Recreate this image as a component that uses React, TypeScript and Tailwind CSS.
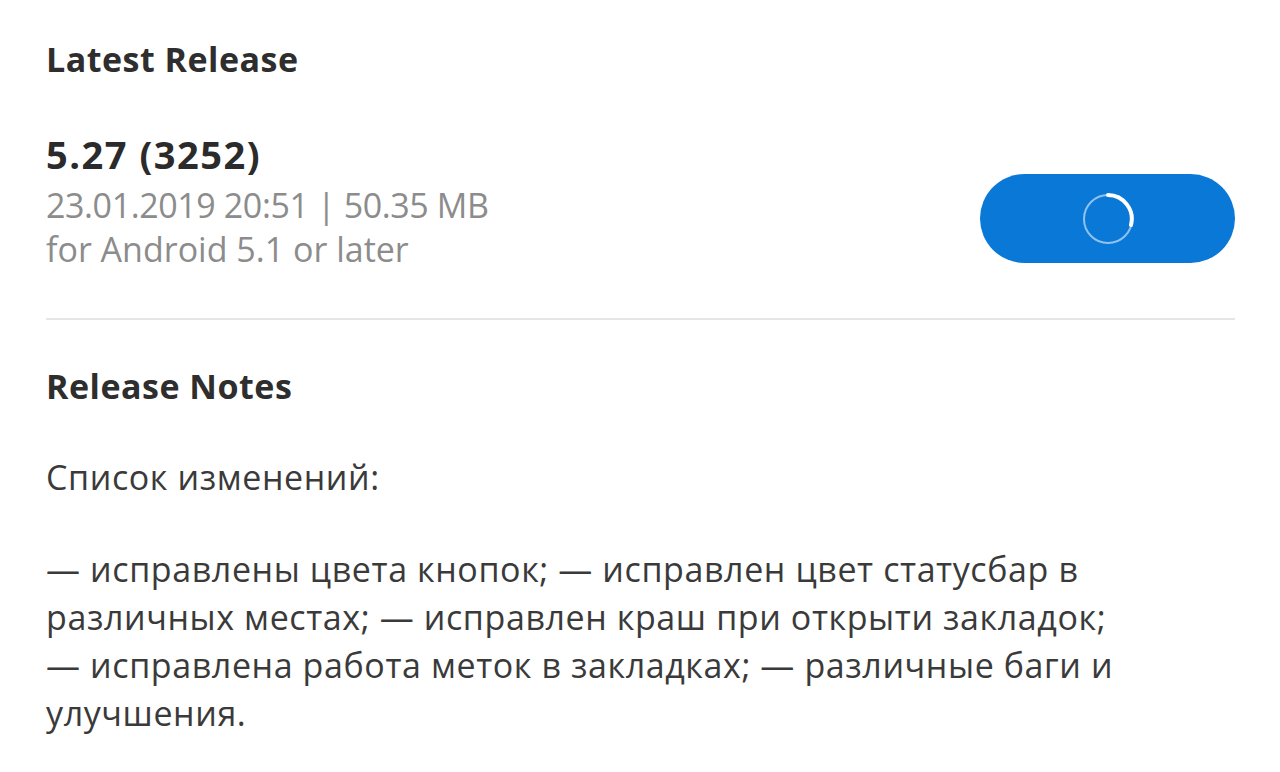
import { useState } from 'react';

interface ReleaseInfo {
    version: string;
    date: string;
    size: string;
    minAndroid: string;
}

const release: ReleaseInfo = {
    version: '5.27 (3252)',
    date: '23.01.2019 20:51',
    size: '50.35 MB',
    minAndroid: '5.1',
};

const noteLines = [
    '— исправлены цвета кнопок; — исправлен цвет статусбар в',
    'различных местах; — исправлен краш при открыти закладок;',
    '— исправлена работа меток в закладках; — различные баги и',
    'улучшения.',
];

function Spinner() {
    return (
        <svg width="56" height="56" viewBox="0 0 56 56" fill="none">
            <circle cx="28" cy="28" r="24" stroke="rgba(255,255,255,0.55)" strokeWidth="2" />
            <path d="M28 4 A24 24 0 0 1 51 34" stroke="#ffffff" strokeWidth="4" strokeLinecap="round" />
        </svg>
    );
}

export default function App() {
    const [loading] = useState(true);

    return (
        <div className="min-h-[772px] w-[1280px] bg-white pl-[46px] pr-[45px] pt-[39px] font-['Open_Sans',sans-serif]">
            {/* Latest release */}
            <h2 className="text-[34px] leading-[40px] font-bold tracking-[0.5px] text-[#2e2e2e]">Latest Release</h2>

            <div className="mt-[55px] flex items-start justify-between">
                <div>
                    <div className="text-[38px] leading-[40px] font-bold tracking-[1.5px] text-[#2b2b2b]">{release.version}</div>
                    <div className="mt-[9px] text-[34px] leading-[44px] text-[#8c8c8c]">
                        <div className="tracking-[-0.4px]">{release.date} | {release.size}</div>
                        <div>for Android {release.minAndroid} or later</div>
                    </div>
                </div>
                <button className="mt-[40px] flex h-[89px] w-[255px] items-center justify-center rounded-full bg-[#0a78d7]">
                    {loading ? <Spinner /> : 'Download'}
                </button>
            </div>

            <div className="mt-[47px] h-[2px] bg-[#e6e6e6]" />

            {/* Release notes */}
            <h2 className="mt-[46px] text-[34px] leading-[40px] font-bold tracking-[0.5px] text-[#2e2e2e]">Release Notes</h2>

            <div className="mt-[47px] text-[34px] leading-[48px] tracking-[0.6px] text-[#3a3a3a]">
                <p>Список изменений:</p>
                <p className="mt-[44px]">
                    {noteLines.map((line, i) => (
                        <span key={i} className="block whitespace-nowrap">{line}</span>
                    ))}
                </p>
            </div>
        </div>
    );
}
